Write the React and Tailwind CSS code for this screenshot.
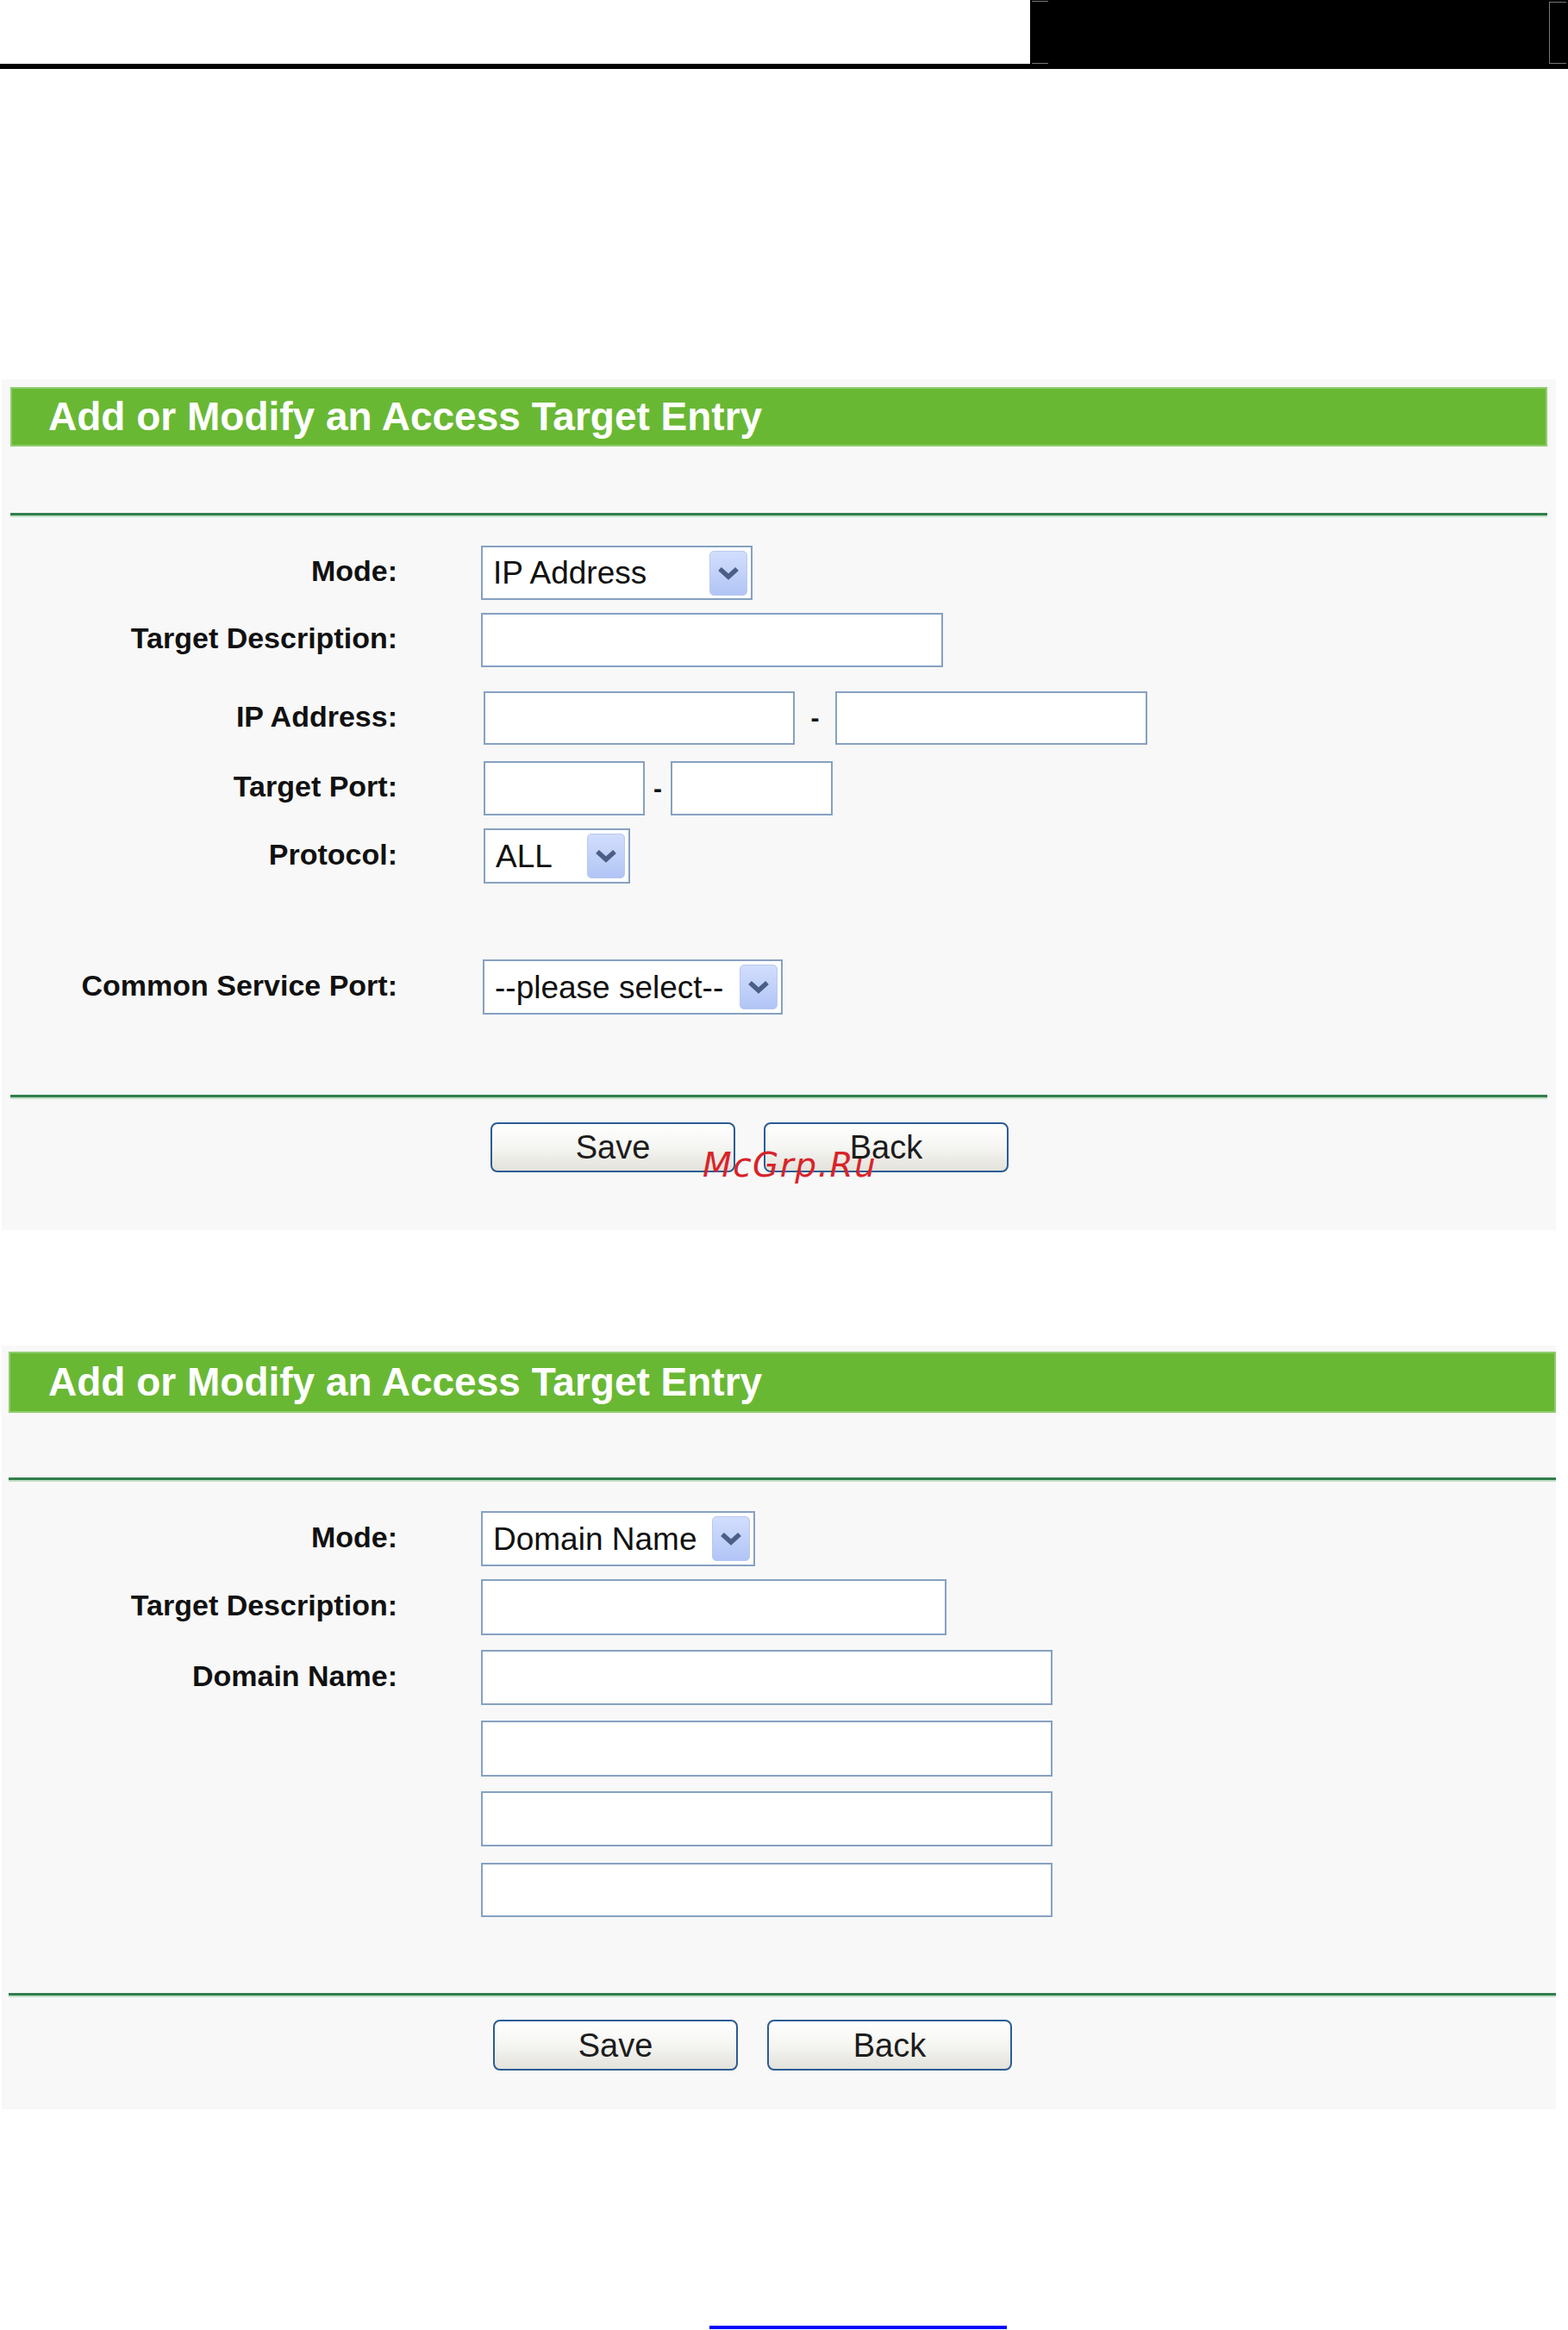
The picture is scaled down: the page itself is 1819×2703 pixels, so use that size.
import React from 'react';

const Chevron = () => (
  <svg width="28" height="18" viewBox="0 0 28 18">
    <path d="M4 4 L14 13 L24 4" fill="none" stroke="#4a5e86" strokeWidth="5.5" strokeLinejoin="miter" />
  </svg>
);

const Select = ({ value, className }) => (
  <div className={`flex h-full items-center justify-between border-2 border-[#86a1c1] bg-white pl-[12px] pr-[4px] ${className}`}>
    <span className="text-[37px] leading-none text-[#111]">{value}</span>
    <div className="flex h-[52px] w-[44px] items-center justify-center rounded-[5px] border border-[#b9c9ef] bg-linear-to-b from-[#d2defd] to-[#b1c5f5]">
      <Chevron />
    </div>
  </div>
);

const Field = ({ className }) => (
  <input type="text" className={`h-full border-2 border-[#86a1c1] bg-white outline-none ${className}`} />
);

const Row = ({ label, className, children }) => (
  <div className={`flex items-center ${className}`}>
    <div className="w-[449px] pb-[5px] text-right text-[34px] font-bold leading-none text-[#111]">{label}</div>
    <div className="ml-[97px] flex h-full items-center">{children}</div>
  </div>
);

const Btn = ({ children }) => (
  <button className="h-full w-[284px] rounded-[8px] border-2 border-[#2b5c93] bg-linear-to-b from-[#ffffff] via-[#f5f5f2] to-[#e3e2db] text-[38px] leading-none text-[#1c1c1c]">
    {children}
  </button>
);

const Separator = ({ className }) => (
  <div className={className}>
    <div className="h-[3px] bg-[#317e4c]"></div>
    <div className="h-[2px] bg-[#c4e0ca]"></div>
  </div>
);

const Title = ({ className }) => (
  <div className={`border-2 border-[#8fcd6e] bg-[#69b834] pl-[42px] text-[46px] font-bold text-white ${className}`}>
    Add or Modify an Access Target Entry
  </div>
);

export default function App() {
  return (
    <div className="relative h-[2703px] w-[1819px] overflow-hidden bg-white font-['Liberation_Sans',Arial,sans-serif]">
      {/* page header */}
      <div className="flex h-[80px]">
        <div className="h-full flex-1 border-b-[6px] border-black"></div>
        <div className="relative h-full w-[624px] bg-black">
          <div className="absolute left-[2px] top-[1px] h-[1px] w-[19px] bg-[#777]"></div>
          <div className="absolute left-[2px] top-[73px] h-[1px] w-[19px] bg-[#777]"></div>
          <div className="absolute left-[602px] top-[2px] h-[71px] w-[1px] bg-[#777]"></div>
          <div className="absolute left-[602px] top-[2px] h-[1px] w-[20px] bg-[#777]"></div>
          <div className="absolute left-[602px] top-[73px] h-[1px] w-[20px] bg-[#777]"></div>
        </div>
      </div>

      {/* panel 1: IP Address */}
      <div className="ml-[2px] mt-[360px] w-[1803px] bg-[#f8f8f8] pb-[67px] pl-[10px] pr-[10px] pt-[9px]">
        <Title className="h-[69px] leading-[65px]" />
        <Separator className="mt-[77px]" />
        <Row label="Mode:" className="mt-[33px] h-[63px]">
          <Select value="IP Address" className="w-[315px]" />
        </Row>
        <Row label="Target Description:" className="mt-[15px] h-[63px]">
          <Field className="w-[536px]" />
        </Row>
        <Row label="IP Address:" className="mt-[28px] h-[62px]">
          <Field className="ml-[3px] w-[361px]" />
          <span className="w-[47px] text-center text-[30px] font-bold leading-none text-[#111]">-</span>
          <Field className="w-[362px]" />
        </Row>
        <Row label="Target Port:" className="mt-[19px] h-[63px]">
          <Field className="ml-[3px] w-[187px]" />
          <span className="w-[30px] text-center text-[30px] font-bold leading-none text-[#111]">-</span>
          <Field className="w-[188px]" />
        </Row>
        <Row label="Protocol:" className="mt-[15px] h-[64px]">
          <Select value="ALL" className="ml-[3px] w-[170px]" />
        </Row>
        <Row label="Common Service Port:" className="mt-[88px] h-[64px]">
          <Select value="--please select--" className="ml-[2px] w-[348px]" />
        </Row>
        <Separator className="mt-[93px]" />
        <div className="ml-[557px] mt-[27px] flex h-[58px] gap-[33px]">
          <Btn>Save</Btn>
          <Btn>Back</Btn>
        </div>
      </div>

      {/* panel 2: Domain Name */}
      <div className="ml-[2px] mt-[134px] w-[1803px] bg-[#f8f8f8] pb-[45px] pl-[8px] pt-[7px]">
        <Title className="h-[71px] pl-[44px] leading-[66px]" />
        <Separator className="mt-[75px]" />
        <div className="pl-[2px]">
          <Row label="Mode:" className="mt-[34px] h-[64px]">
            <Select value="Domain Name" className="w-[318px]" />
          </Row>
          <Row label="Target Description:" className="mt-[15px] h-[65px]">
            <Field className="w-[540px]" />
          </Row>
          <Row label="Domain Name:" className="mt-[17px] h-[64px]">
            <Field className="w-[663px]" />
          </Row>
          <Row label="" className="mt-[18px] h-[65px]">
            <Field className="w-[663px]" />
          </Row>
          <Row label="" className="mt-[17px] h-[64px]">
            <Field className="w-[663px]" />
          </Row>
          <Row label="" className="mt-[19px] h-[63px]">
            <Field className="w-[663px]" />
          </Row>
        </div>
        <Separator className="mt-[88px]" />
        <div className="ml-[562px] mt-[26px] flex h-[59px] gap-[34px]">
          <Btn>Save</Btn>
          <Btn>Back</Btn>
        </div>
      </div>

      {/* page footer rule */}
      <div className="ml-[823px] mt-[251px] h-[4px] w-[345px] bg-[#0000ff]"></div>

      {/* watermark */}
      <div className="absolute left-[815px] top-[1332px] font-['DejaVu_Sans',sans-serif] text-[39px] italic leading-none tracking-[1.5px] text-[#d8232a]">
        McGrp.Ru
      </div>
    </div>
  );
}
